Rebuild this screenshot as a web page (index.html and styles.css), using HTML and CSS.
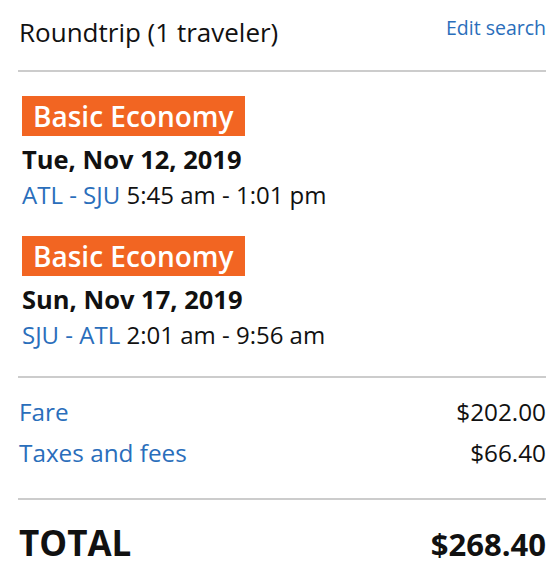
FILE: index.html
```html
<!DOCTYPE html>
<html lang="en">
<head>
<meta charset="utf-8">
<title>Trip summary</title>
<link rel="stylesheet" href="styles.css">
</head>
<body>
<div class="summary">
  <div class="header">
    <div class="trip-type">Roundtrip (1 traveler)</div>
    <a class="edit-link" href="#">Edit search</a>
  </div>
  <div class="flights">
    <div class="flight">
      <div class="badge">Basic Economy</div>
      <div class="date">Tue, Nov 12, 2019</div>
      <div class="route"><a class="airports" href="#">ATL - SJU</a> 5:45 am - 1:01 pm</div>
    </div>
    <div class="flight">
      <div class="badge">Basic Economy</div>
      <div class="date">Sun, Nov 17, 2019</div>
      <div class="route"><a class="airports" href="#">SJU - ATL</a> 2:01 am - 9:56 am</div>
    </div>
  </div>
  <div class="costs">
    <div class="cost-row"><a class="cost-label" href="#">Fare</a><span class="cost-value">$202.00</span></div>
    <div class="cost-row"><a class="cost-label" href="#">Taxes and fees</a><span class="cost-value">$66.40</span></div>
  </div>
  <div class="total">
    <span class="total-label">TOTAL</span>
    <span class="total-value">$268.40</span>
  </div>
</div>
</body>
</html>
```
FILE: styles.css
```css
* { box-sizing: border-box; }
html, body { margin: 0; padding: 0; background: #fff; }
body {
  font-family: "Open Sans", "Liberation Sans", sans-serif;
  color: #111;
}
a { text-decoration: none; color: #2a6ebb; }

.summary {
  width: 556px;
  padding: 0 10px 0 18px;
}

.header {
  display: flex;
  justify-content: space-between;
  align-items: flex-start;
  padding: 14px 0 0;
  border-bottom: 2px solid #cccccc;
  height: 72px;
}
.trip-type {
  font-size: 26px;
  line-height: 36px;
  padding-left: 1px;
}
.edit-link {
  font-size: 19.5px;
  line-height: 28px;
}

.flights {
  padding: 24px 0 23px 4px;
  border-bottom: 2px solid #cccccc;
  display: flex;
  flex-direction: column;
  gap: 23px;
}
.flight {
  display: flex;
  flex-direction: column;
}
.badge {
  align-self: flex-start;
  background: #f26522;
  color: #fff;
  font-weight: 600;
  font-size: 28px;
  line-height: 40px;
  padding: 0 11px 0 11px;
}
.date {
  font-weight: 700;
  font-size: 25.5px;
  line-height: 36px;
  margin-top: 5px;
}
.route {
  font-size: 24px;
  line-height: 36px;
}

.costs {
  padding: 19px 0 30px 1px;
  border-bottom: 2px solid #cccccc;
  display: flex;
  flex-direction: column;
  gap: 11px;
}
.cost-row {
  display: flex;
  justify-content: space-between;
  font-size: 24.3px;
  line-height: 30px;
}

.total {
  display: flex;
  justify-content: space-between;
  align-items: baseline;
  padding: 20px 0 0 1px;
  font-weight: 700;
}
.total-label { font-size: 35px; line-height: 46px; }
.total-value { font-size: 31px; line-height: 46px; }
```
